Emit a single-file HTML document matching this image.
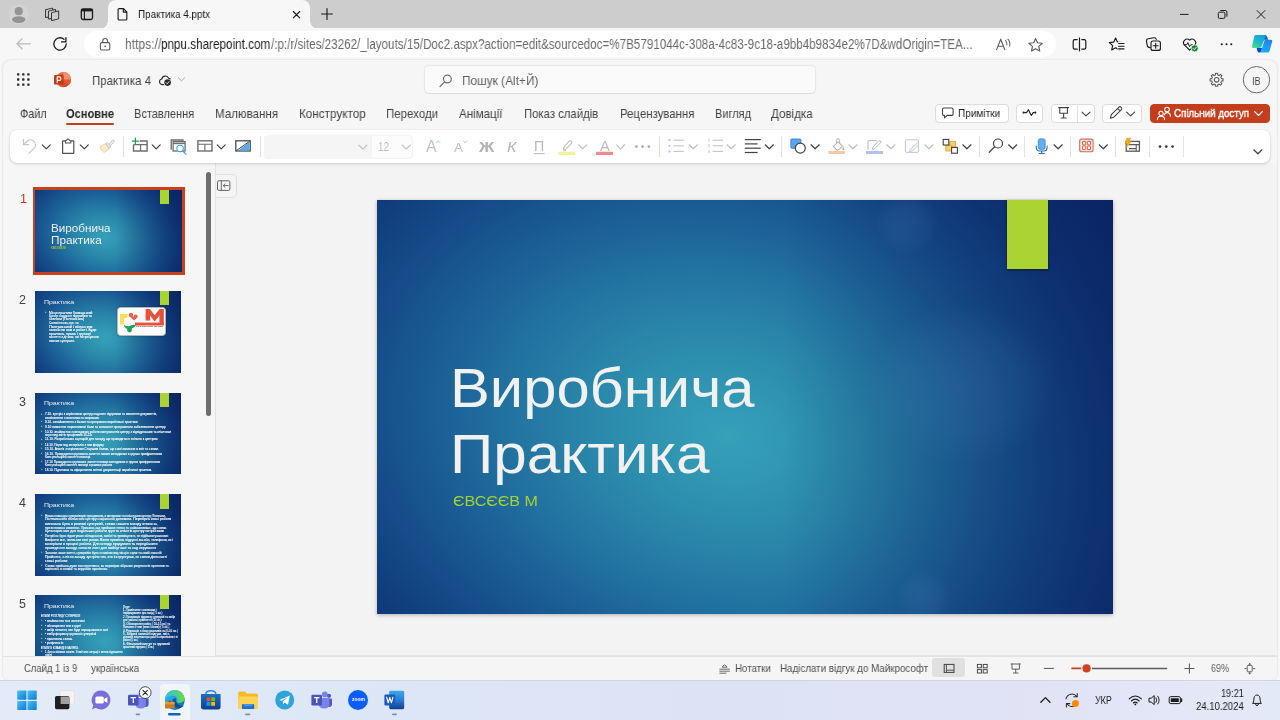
<!DOCTYPE html>
<html lang="uk">
<head>
<meta charset="utf-8">
<title>Практика 4.pptx</title>
<style>
*{box-sizing:border-box;margin:0;padding:0}
html,body{width:1280px;height:720px;overflow:hidden;background:#f7f7f7;font-family:"Liberation Sans",sans-serif;color:#242424}
.a{position:absolute}
.t{position:absolute;white-space:nowrap;line-height:1;transform-origin:0 50%;will-change:transform}
#ico{position:absolute;left:0;top:0;width:1280px;height:720px;overflow:visible;pointer-events:none}
#tabbar{left:0;top:0;width:1280px;height:29px;background:#cdcdcd}
#tab{left:108px;top:0;width:202px;height:29px;background:#f7f7f7;border-radius:8px 8px 0 0}
#tab:before,#tab:after{content:"";position:absolute;bottom:0;width:8px;height:8px}
#tab:before{left:-8px;background:radial-gradient(circle at 0 0,transparent 7.5px,#f7f7f7 8px)}
#tab:after{right:-8px;background:radial-gradient(circle at 100% 0,transparent 7.5px,#f7f7f7 8px)}
#addr{left:0;top:28px;width:1280px;height:33px;background:#f7f7f7}
#url{left:84px;top:31px;width:972px;height:26px;background:#fff;border-radius:13px}
#app{left:3px;top:60px;width:1274px;height:620px;background:#f6f6f6;border-radius:8px 8px 6px 6px;box-shadow:0 0 2px rgba(0,0,0,.18)}
#toolbar{left:10px;top:130px;width:1260px;height:33px;background:#fff;border-radius:7px;box-shadow:0 1px 3px rgba(0,0,0,.16),0 0 1px rgba(0,0,0,.12)}
#search{left:425px;top:66px;width:390px;height:27px;background:#fafafa;border-radius:4px;box-shadow:0 0 2px rgba(0,0,0,.2),0 1px 1px rgba(0,0,0,.06)}
#fontbox{left:264px;top:135px;width:107px;height:24px;background:#f5f5f5;border-radius:4px 0 0 4px}
#sizebox{left:371px;top:135px;width:42px;height:24px;background:#fcfcfc;border:1px solid #f3f3f3;border-radius:0 4px 4px 0}
#canvas{left:215px;top:163px;width:1062px;height:493px;background:#f3f3f3;border-left:1px solid #e2e2e2;box-shadow:inset 0 -1px 0 #e6e6e6}
#status{left:3px;top:656px;width:1274px;height:24px;background:#f5f5f5;border-top:1px solid #e3e3e3;border-radius:0 0 6px 6px}
#taskbar{left:0;top:680px;width:1280px;height:40px;background:linear-gradient(90deg,#e3ebf8 0%,#dde7f6 25%,#dce3f5 55%,#e1e3f5 80%,#e4e9f7 100%);border-top:1px solid #cfd6e2}
.btn{position:absolute;top:103.5px;height:19px;background:#fff;border:1px solid #dcdcdc;border-radius:4px}
.sep{position:absolute;top:136px;width:1px;height:21px;background:#e3e3e3}
.thumb{position:absolute;z-index:0;left:35px;width:146px;height:82px;background:#0c2e6e;overflow:hidden}
.thumb:before{content:"";position:absolute;left:-40px;top:-60px;width:226px;height:202px;transform:skewX(10deg);background:radial-gradient(ellipse 95.3px 73.4px at 108.7px 106.8px,#36a0b8 0%,#3299b4 10%,#2a88ab 28%,#2273a1 45%,#1b5f96 60%,#154c89 75%,#103b7b 90%,#0c2e6e 108%)}
.thumb:after{content:"";position:absolute;left:0;top:0;width:100%;height:100%;background:linear-gradient(90deg,rgba(8,28,92,0) 55%,rgba(8,28,92,.55) 100%)}
.thumb>*{z-index:2}
.thumb i{position:absolute;left:124.9px;top:0;width:9px;height:14.2px;background:#abd332}
.thumb b{position:absolute;will-change:transform;left:9px;top:7.5px;font-size:5.6px;font-weight:normal;color:#eef3f7;line-height:1;transform:scaleX(1.12);transform-origin:0 0}
.thumb p{position:absolute;text-shadow:0 0 .5px rgba(255,255,255,.9);will-change:transform;font-size:2.45px;line-height:3.38px;color:#f4f7fa;font-weight:bold;white-space:pre;letter-spacing:-.02px}
.num{position:absolute;will-change:transform;left:19px;font-size:12.5px;color:#424242;line-height:1}

</style>
</head>
<body>
<div class="a" id="tabbar"></div>
<div class="a" id="tab"></div>
<div class="a" id="addr"></div>
<div class="a" id="url"></div>
<div class="a" id="app"></div>
<div class="a" id="search"></div>
<div class="a" style="left:66px;top:123px;width:48px;height:2.4px;background:#c43e1c;border-radius:1.2px"></div>
<div class="btn" style="left:934.5px;width:74px"></div>
<div class="btn" style="left:1015.5px;width:27px"></div>
<div class="btn" style="left:1050.5px;width:44.5px"></div>
<div class="a" style="left:1077px;top:104px;width:1px;height:18px;background:#e0e0e0"></div>
<div class="btn" style="left:1102px;width:40px"></div>
<div class="btn" style="left:1150px;width:120px;background:#c43e1c;border-color:#c43e1c"></div>
<div class="a" id="canvas"></div>
<div class="a" id="toolbar"></div>
<div class="a" id="fontbox"></div>
<div class="a" id="sizebox"></div>
<div class="sep" style="left:122.5px"></div>
<div class="sep" style="left:260px"></div>
<div class="sep" style="left:659px"></div>
<div class="sep" style="left:781px"></div>
<div class="sep" style="left:979px"></div>
<div class="sep" style="left:1024px"></div>
<div class="sep" style="left:1070px"></div>
<div class="sep" style="left:1115px"></div>
<div class="sep" style="left:1149px"></div>
<div class="sep" style="left:1183px"></div>
<div class="a" id="slide" style="left:377px;top:200px;width:735.5px;height:414px;overflow:hidden;background:#0c2e6e;box-shadow:0 1px 4px rgba(0,0,0,.28)"><div style="position:absolute;left:-200px;top:-300px;width:1136px;height:1014px;transform:skewX(10deg);background:radial-gradient(ellipse 480px 370px at 546px 536px,#36a0b8 0%,#3299b4 10%,#2a88ab 28%,#2273a1 45%,#1b5f96 60%,#154c89 75%,#103b7b 90%,#0c2e6e 108%)"></div><div style="position:absolute;left:0;top:0;width:100%;height:100%;background:linear-gradient(90deg,rgba(8,28,92,0) 55%,rgba(8,28,92,.55) 100%)"></div><div style="position:absolute;left:0;top:0;width:100%;height:100%;background:radial-gradient(circle 32px at 530px 23px,rgba(110,160,215,.12) 0%,rgba(110,160,215,.08) 55%,rgba(110,160,215,0) 100%),radial-gradient(circle 28px at 547px 398px,rgba(110,160,215,.13) 0%,rgba(110,160,215,.08) 55%,rgba(110,160,215,0) 100%),radial-gradient(ellipse 95px 80px at 585px 185px,rgba(80,140,200,.17) 0%,rgba(80,140,200,.1) 60%,rgba(80,140,200,0) 100%)"></div></div>
<div class="a" style="left:1007px;top:200px;width:40.5px;height:69px;background:#abd332;box-shadow:0 1px 2.5px rgba(0,0,0,.5)"></div>
<div class="a" style="left:205.5px;top:172px;width:5px;height:244px;background:#6e6e6e;border-radius:2.5px"></div>
<div class="a" style="left:216px;top:173.5px;width:21px;height:24px;background:#f5f5f5;border:1px solid #dedede;border-left:none;border-radius:0 5px 5px 0"></div>
<div class="a" id="status"></div>
<div class="a" id="taskbar"></div>
<div class="a" style="left:932px;top:658px;width:33px;height:19px;background:#e0e0e0;border-radius:3px"></div>
<div class="a" style="left:160px;top:684px;width:30px;height:36px;background:rgba(255,255,255,.55);border-radius:4px 4px 0 0"></div>

<div class="a" style="left:32.5px;top:187px;width:152px;height:87.5px;background:#c8401d"></div>
<div class="thumb" style="top:189.5px;height:82.5px;width:147px"><i></i></div>
<div class="thumb" style="top:291.3px"><i></i>
<div class="a" style="left:81.7px;top:15.6px;width:49px;height:29px;background:#fbfbfb;border:1px solid #b4bac2;border-radius:3.5px;box-shadow:0 0 1.5px rgba(0,0,0,.5)"></div>
</div>
<div class="thumb" style="top:392.6px;height:81.6px"><i></i></div>
<div class="thumb" style="top:494.4px"><i></i></div>
<div class="thumb" style="top:595.3px;height:60.5px"><i></i></div>
<div class="num" style="top:192.5px;color:#c43e1c;left:19.5px">1</div>
<div class="num" style="top:293.8px">2</div>
<div class="num" style="top:395.5px">3</div>
<div class="num" style="top:496.8px">4</div>
<div class="num" style="top:597.8px">5</div>

<svg id="ico" viewBox="0 0 1280 720" width="1280" height="720">
<defs><linearGradient id="gWin" x1="0" y1="0" x2="1" y2="1"><stop offset="0" stop-color="#4cc2f7"/><stop offset="1" stop-color="#0a78d4"/></linearGradient><linearGradient id="gPP" x1="0" y1="0" x2="1" y2="1"><stop offset="0" stop-color="#f0714a"/><stop offset="1" stop-color="#c8401d"/></linearGradient><linearGradient id="gEdge" x1="0" y1="0" x2="1" y2="1"><stop offset="0" stop-color="#35c1f1"/><stop offset=".5" stop-color="#1b9de2"/><stop offset="1" stop-color="#0c59a4"/></linearGradient><linearGradient id="gEdge2" x1="0" y1="0" x2="1" y2="0"><stop offset="0" stop-color="#2dc2e8"/><stop offset="1" stop-color="#6bd649"/></linearGradient><linearGradient id="gCopL" x1=".8" y1="0" x2=".2" y2="1"><stop offset="0" stop-color="#12a0dc"/><stop offset=".55" stop-color="#1fb8c8"/><stop offset="1" stop-color="#43e08c"/></linearGradient><linearGradient id="gCopR" x1=".6" y1="0" x2=".4" y2="1"><stop offset="0" stop-color="#2a7fe6"/><stop offset="1" stop-color="#14b2f8"/></linearGradient><linearGradient id="gWord" x1="0" y1="0" x2="0" y2="1"><stop offset="0" stop-color="#41a5ee"/><stop offset=".5" stop-color="#2b7cd3"/><stop offset="1" stop-color="#103f91"/></linearGradient><linearGradient id="gStore" x1="0" y1="0" x2="0" y2="1"><stop offset="0" stop-color="#1d6fc9"/><stop offset="1" stop-color="#0f3f8f"/></linearGradient></defs>
<g id="tabicons">
<circle cx="18.8" cy="14.4" r="10" fill="#d3d3d3"/>
<circle cx="18.7" cy="11.2" r="4.1" fill="#949494"/>
<ellipse cx="18.7" cy="19.6" rx="6.7" ry="3.3" fill="#939393"/>
<g fill="#cdcdcd" stroke="#2b2b2b" stroke-width="1.2" stroke-linejoin="round">
<path d="M46.0 10.2 L52.2 8.6 L52.2 15.5 L46.0 17.1 Z" stroke-width="1.9"/>
<path d="M46.0 10.2 L52.2 8.6 L52.2 15.5 L46.0 17.1 Z" stroke="#cdcdcd" stroke-width=".1"/>
<path d="M48.9 11.6 L55.1 10.0 L55.1 16.9 L48.9 18.5 Z" stroke-width="1.9"/>
<path d="M48.9 11.6 L55.1 10.0 L55.1 16.9 L48.9 18.5 Z" stroke="#cdcdcd" stroke-width=".1"/>
<path d="M52.0 13.1 L58.2 11.5 L58.2 18.4 L52.0 20.0 Z" stroke-width="1.9"/>
<path d="M52.0 13.1 L58.2 11.5 L58.2 18.4 L52.0 20.0 Z" stroke="#cdcdcd" stroke-width=".1"/>
</g>
<rect x="81.3" y="8.9" width="11.2" height="10.6" rx="1.8" fill="none" stroke="#1b1b1b" stroke-width="1.3"/>
<path d="M81.3 10.2 h11.2" stroke="#1b1b1b" stroke-width="2.4"/>
<path d="M84.4 10 v9.4" stroke="#1b1b1b" stroke-width="1.15"/>
<path d="M119.2 8.6 h4.3 l3.3 3.3 v7 q0 1.1 -1.1 1.1 h-6.5 q-1.1 0 -1.1 -1.1 v-9.2 q0 -1.1 1.1 -1.1z M123.3 8.8 v3.3 h3.3" fill="none" stroke="#1b1b1b" stroke-width="1.15" stroke-linejoin="round"/>
<path d="M293.3 11.5 l6.4 6.4 M299.7 11.5 l-6.4 6.4" stroke="#1b1b1b" stroke-width="1.15" stroke-linecap="round"/>
<path d="M321.6 14 h10.8 M327 8.6 v10.8" stroke="#1b1b1b" stroke-width="1.15" stroke-linecap="round"/>
<path d="M1180 14.4 h8.6" stroke="#1b1b1b" stroke-width="1"/>
<rect x="1218.3" y="12.2" width="6.6" height="6.2" rx="1.2" fill="none" stroke="#1b1b1b" stroke-width="1"/>
<path d="M1220.3 10.5 h5 q1.6 0 1.6 1.6 v4.6" fill="none" stroke="#1b1b1b" stroke-width="1"/>
<path d="M1256.8 10.3 l8.4 8.4 M1265.2 10.3 l-8.4 8.4" stroke="#1b1b1b" stroke-width="1"/>
</g>
<g id="addricons">
<path d="M17 43.8 h13.4 M22.2 38.6 l-5.2 5.2 l5.2 5.2" fill="none" stroke="#bcbcbc" stroke-width="1.25" stroke-linecap="round" stroke-linejoin="round"/>
<path d="M66.2 44 a6.2 6.2 0 1 1 -2.2 -4.75" fill="none" stroke="#1b1b1b" stroke-width="1.3" stroke-linecap="round"/>
<path d="M65.9 37.6 v4.3 h-4.3" fill="none" stroke="#1b1b1b" stroke-width="1.3" stroke-linecap="round" stroke-linejoin="round"/>
<rect x="100.4" y="42.6" width="9.4" height="7.4" rx="1.4" fill="none" stroke="#5a5a5a" stroke-width="1.1"/>
<path d="M102.7 42.4 v-1.5 a2.4 2.4 0 0 1 4.8 0 v1.5" fill="none" stroke="#5a5a5a" stroke-width="1.1"/>
<circle cx="105.1" cy="46.3" r=".9" fill="#5a5a5a"/>
<path d="M996.6 49.6 l4.1 -10.4 l4.1 10.4 M998.2 46.2 h5" fill="none" stroke="#5f5f5f" stroke-width="1.15" stroke-linejoin="round" stroke-linecap="round"/>
<path d="M1005.6 40.6 q1.8 1.8 1.3 4.4 M1007.8 39.2 q2.8 2.8 1.9 6.8" fill="none" stroke="#5f5f5f" stroke-width="1.05" stroke-linecap="round"/>
<polygon points="1035.60,38.40 1037.54,42.73 1042.26,43.24 1038.74,46.42 1039.71,51.06 1035.60,48.70 1031.49,51.06 1032.46,46.42 1028.94,43.24 1033.66,42.73" fill="none" stroke="#5f5f5f" stroke-width="1.15" stroke-linejoin="round" />
<path d="M1077.2 39.6 h-2.4 q-1.6 0 -1.6 1.6 v6.4 q0 1.6 1.6 1.6 h2.4 M1081.8 39.6 h2.4 q1.6 0 1.6 1.6 v6.4 q0 1.6 -1.6 1.6 h-2.4 M1079.5 37.9 v12.9" fill="none" stroke="#1b1b1b" stroke-width="1.2" stroke-linecap="round"/>
<polygon points="1115.60,38.00 1117.42,42.09 1121.88,42.56 1118.55,45.56 1119.48,49.94 1115.60,47.70 1111.72,49.94 1112.65,45.56 1109.32,42.56 1113.78,42.09" fill="none" stroke="#1b1b1b" stroke-width="1.15" stroke-linejoin="round" />
<rect x="1117.6" y="42" width="7" height="8.5" fill="#f7f7f7"/>
<path d="M1118.6 43.5 h5.4 M1118.6 46.2 h5.4 M1118.6 48.9 h5.4" stroke="#1b1b1b" stroke-width="1.1" stroke-linecap="round"/>
<path d="M1150.2 47.6 q-2.6 0 -3 -2.2 l-.7 -4.2 q-.3 -2 1.7 -2.4 l5.6 -1 q2 -.3 2.5 1.5" fill="none" stroke="#1b1b1b" stroke-width="1.15" stroke-linecap="round"/>
<rect x="1151" y="41" width="9.4" height="9.4" rx="2" fill="#f7f7f7" stroke="#1b1b1b" stroke-width="1.15"/>
<path d="M1153.2 45.7 h5 M1155.7 43.2 v5" stroke="#1b1b1b" stroke-width="1.1" stroke-linecap="round"/>
<path d="M1189.6 50.2 l-5.3 -5.3 a3.55 3.55 0 0 1 5.3 -4.7 a3.55 3.55 0 0 1 5.3 4.7 z" fill="none" stroke="#1b1b1b" stroke-width="1.15" stroke-linejoin="round"/>
<path d="M1184.2 44.8 h2.5 l1.2 -2.2 l1.7 4 l1.1 -1.8 h1.6" fill="none" stroke="#1b1b1b" stroke-width="1" stroke-linejoin="round" stroke-linecap="round"/>
<circle cx="1194.7" cy="48.3" r="3.6" fill="#1a8a3a" stroke="#f7f7f7" stroke-width=".8"/>
<path d="M1193 48.4 l1.2 1.2 l2.2 -2.4" fill="none" stroke="#fff" stroke-width=".9" stroke-linecap="round" stroke-linejoin="round"/>
<circle cx="1221.7" cy="44.2" r="1.05" fill="#1b1b1b"/>
<circle cx="1226.5" cy="44.2" r="1.05" fill="#1b1b1b"/>
<circle cx="1231.3" cy="44.2" r="1.05" fill="#1b1b1b"/>
<g><path d="M1262 35 h2.800 q1.700 0 2.300 1.700 l1 3 h-4.600z" fill="#0f5fae"/><path d="M1256.700 47.900 h5.700 l-1.300 3.500 q-.5 1.200 -1.800 1.200 q-1.500 0 -1.900 -1.500z" fill="#0d43d4"/><path d="M1255.800 35 h8.800 q1.500 0 .9 1.600 l-3.900 10 q-.6 1.300 -2 1.300 h-6.600 q-1.400 0 -1 -1.700 l2.200 -9.800 q.4 -1.400 1.600 -1.400z" fill="url(#gCopL)"/><path d="M1265.300 39.700 h5.400 q2 0 1.500 1.900 l-2.600 9.400 q-.5 1.600 -2.100 1.600 h-6 q-1 0 -.4 -1.600 l3.200 -10 q.4 -1.300 1 -1.300z" fill="url(#gCopR)"/></g>
</g>
<g id="hdr">
<rect x="17.0" y="73.2" width="2.4" height="2.4" rx=".6" fill="#2b2b2b"/>
<rect x="22.1" y="73.2" width="2.4" height="2.4" rx=".6" fill="#2b2b2b"/>
<rect x="27.2" y="73.2" width="2.4" height="2.4" rx=".6" fill="#2b2b2b"/>
<rect x="17.0" y="78.3" width="2.4" height="2.4" rx=".6" fill="#2b2b2b"/>
<rect x="22.1" y="78.3" width="2.4" height="2.4" rx=".6" fill="#2b2b2b"/>
<rect x="27.2" y="78.3" width="2.4" height="2.4" rx=".6" fill="#2b2b2b"/>
<rect x="17.0" y="83.4" width="2.4" height="2.4" rx=".6" fill="#2b2b2b"/>
<rect x="22.1" y="83.4" width="2.4" height="2.4" rx=".6" fill="#2b2b2b"/>
<rect x="27.2" y="83.4" width="2.4" height="2.4" rx=".6" fill="#2b2b2b"/>
<circle cx="63.4" cy="79.7" r="7.6" fill="url(#gPP)"/>
<path d="M63.4 72.1 a7.6 7.6 0 0 1 7.6 7.6 h-7.6z" fill="#f58f6c"/>
<path d="M63.4 79.7 h7.6 a7.6 7.6 0 0 1 -2.3 5.4 l-5.3 -5.4z" fill="#e05a33"/>
<rect x="54" y="75" width="9.6" height="9.6" rx="1.2" fill="#c13b1b"/>
<path d="M57.2 82.7 v-5.8 h2 a1.75 1.75 0 0 1 0 3.5 h-2" fill="none" stroke="#fff" stroke-width="1.15" stroke-linejoin="round"/>
<path d="M163.6 84.6 h-1.3 a2.8 2.8 0 0 1 -.5 -5.55 a3.6 3.6 0 0 1 6.9 -.7 q.9 .1 1.5 .6" fill="none" stroke="#2b2b2b" stroke-width="1.1" stroke-linecap="round"/>
<circle cx="167.6" cy="82.6" r="3.3" fill="#2b2b2b"/>
<path d="M166.1 82.7 l1.1 1.1 l1.9 -2.2" fill="none" stroke="#fff" stroke-width=".85" stroke-linecap="round" stroke-linejoin="round"/>
<path d="M178.4 77.8 L181.5 80.8 L184.6 77.8" fill="none" stroke="#a6a6a6" stroke-width="1.0" stroke-linecap="round" stroke-linejoin="round"/>
<circle cx="447.4" cy="79" r="3.9" fill="none" stroke="#707070" stroke-width="1.15"/>
<path d="M444.6 81.9 l-4.6 4.6" stroke="#707070" stroke-width="1.2" stroke-linecap="round"/>
<polygon points="1223.10,78.68 1223.10,80.92 1221.47,80.92 1220.84,82.46 1221.99,83.61 1220.41,85.19 1219.26,84.04 1217.72,84.67 1217.72,86.30 1215.48,86.30 1215.48,84.67 1213.94,84.04 1212.79,85.19 1211.21,83.61 1212.36,82.46 1211.73,80.92 1210.10,80.92 1210.10,78.68 1211.73,78.68 1212.36,77.14 1211.21,75.99 1212.79,74.41 1213.94,75.56 1215.48,74.93 1215.48,73.30 1217.72,73.30 1217.72,74.93 1219.26,75.56 1220.41,74.41 1221.99,75.99 1220.84,77.14 1221.47,78.68" fill="none" stroke="#5a5a5a" stroke-width="1.05" stroke-linejoin="round"/>
<circle cx="1216.6" cy="79.8" r="2.3" fill="none" stroke="#5a5a5a" stroke-width="1.05"/>
<circle cx="1256.5" cy="79.7" r="13.2" fill="#f5f5f5" stroke="#6a6a6a" stroke-width="1"/>
</g>
<g id="rbtn">
<path d="M943.8 108 h8 q1.3 0 1.3 1.3 v4.8 q0 1.3 -1.3 1.3 h-4.6 l-2.7 2.4 v-2.4 h-.7 q-1.3 0 -1.3 -1.3 v-4.8 q0 -1.3 1.3 -1.3z" fill="none" stroke="#424242" stroke-width="1.1" stroke-linejoin="round"/>
<path d="M1024.6 112.6 h1.9 l1.9 -2.9 l2.9 5.8 l1.9 -2.9 h1" fill="none" stroke="#242424" stroke-width="1.15" stroke-linejoin="round" stroke-linecap="round"/>
<circle cx="1023.6" cy="112.6" r="1.1" fill="#242424"/><circle cx="1035.3" cy="112.6" r="1.1" fill="#242424"/>
<path d="M1058.6 107.6 h10 M1059.8 107.6 v5.6 h7.6 v-5.6 M1063.6 113.2 v4.6 M1061 118 h5.2" fill="none" stroke="#424242" stroke-width="1.1" stroke-linecap="round" stroke-linejoin="round"/>
<path d="M1082.0 112.1 L1086.0 115.9 L1090.0 112.1" fill="none" stroke="#424242" stroke-width="1.15" stroke-linecap="round" stroke-linejoin="round"/>
<path d="M1110.4 118.3 l.9 -3.6 l7.4 -7.4 a1.5 1.5 0 0 1 2.5 2.5 l-7.4 7.4 z M1117.6 108.4 l2.5 2.5" fill="none" stroke="#424242" stroke-width="1.1" stroke-linejoin="round"/>
<path d="M1126.6 112.1 L1130.6 115.9 L1134.6 112.1" fill="none" stroke="#424242" stroke-width="1.15" stroke-linecap="round" stroke-linejoin="round"/>
<circle cx="1161" cy="113.4" r="2.1" fill="none" stroke="#fff" stroke-width="1.05"/>
<path d="M1157.4 119.6 q0 -3.4 3.6 -3.4 q3.6 0 3.6 3.4" fill="none" stroke="#fff" stroke-width="1.05" stroke-linecap="round"/>
<circle cx="1167" cy="109.6" r="2.3" fill="none" stroke="#fff" stroke-width="1.05"/>
<path d="M1164.2 115.2 q.6 -2.6 2.8 -2.6 q3.4 0 3.4 3.6" fill="none" stroke="#fff" stroke-width="1.05" stroke-linecap="round"/>
<path d="M1254.6 111.7 L1258.5 115.5 L1262.4 111.7" fill="none" stroke="#fff" stroke-width="1.15" stroke-linecap="round" stroke-linejoin="round"/>
</g>
<g id="tb">
<path d="M23.4 139.2 v5.4 h5.4" fill="none" stroke="#c6c6c6" stroke-width="1.15" stroke-linecap="round" stroke-linejoin="round"/>
<path d="M23.8 144.2 l3.4 -3 a5 5 0 0 1 7.2 6.9 l-5.6 5.2" fill="none" stroke="#c6c6c6" stroke-width="1.15" stroke-linecap="round" stroke-linejoin="round"/>
<path d="M42.3 144.8 L46.3 148.8 L50.3 144.8" fill="none" stroke="#424242" stroke-width="1.2" stroke-linecap="round" stroke-linejoin="round"/>
<path d="M65.6 140.8 h-2.4 q-.6 0 -.6 .6 v11.400 q0 .6 .6 .6 h10 q.6 0 .6 -.6 v-11.400 q0 -.6 -.6 -.6 h-2.400" fill="none" stroke="#505050" stroke-width="1.2"/>
<path d="M65.400 143 v-1.800 q0 -.5 .5 -.7 l1 -.4 q.3 -1.100 1.200 -1.100 q.9 0 1.200 1.100 l1 .4 q.5 .2 .5 .7 v1.800z" fill="#fff" stroke="#505050" stroke-width="1.050" stroke-linejoin="round"/>
<path d="M80.3 144.8 L84.3 148.8 L88.3 144.8" fill="none" stroke="#424242" stroke-width="1.2" stroke-linecap="round" stroke-linejoin="round"/>
<g opacity=".55"><path d="M100 146.6 l5.6 -3 l3.6 5.4 l-5.2 3.4 q-2.6 -1.2 -4 -5.8z" fill="#f9d9a8" stroke="#e0a85c" stroke-width=".9" stroke-linejoin="round"/><path d="M105.8 143.8 l1.6 -1.4 l3.4 4.6 l-1.6 1.4z" fill="#d8d8d8" stroke="#8a8a8a" stroke-width=".8"/><path d="M109.2 144.2 l3 -3.8 q1 -.8 1.8 0 q.6 .8 0 1.6 l-3.4 3.6z" fill="#e4e4e4" stroke="#8a8a8a" stroke-width=".8"/></g>
<path d="M139.600 141 h7.500 v10 h-13.600 v-6.200" fill="none" stroke="#6e6e6e" stroke-width="1.400"/>
<path d="M133.500 144.600 h13.600 M140.600 144.600 v6.400" stroke="#6e6e6e" stroke-width="1.150"/>
<path d="M132.400 141.200 h6 M135.400 138.200 v6" stroke="#1e9c4d" stroke-width="1.200" stroke-linecap="round"/>
<path d="M152.2 144.8 L156.2 148.8 L160.2 144.8" fill="none" stroke="#424242" stroke-width="1.2" stroke-linecap="round" stroke-linejoin="round"/>
<path d="M171.200 149.800 v-9.800 h11.800 v1.600" fill="none" stroke="#6e6e6e" stroke-width="1.300"/>
<rect x="173.100" y="141.600" width="12" height="9.400" fill="#fff" stroke="#6e6e6e" stroke-width="1.300"/>
<path d="M173.100 143.400 h12" stroke="#6e6e6e" stroke-width="1.500"/>
<circle cx="180.100" cy="148.400" r="3.200" fill="#fff" stroke="#4aa3dc" stroke-width="1.100"/>
<path d="M182.500 150.800 l3.500 3.400" stroke="#4aa3dc" stroke-width="1.200" stroke-linecap="round"/>
<rect x="197.900" y="140.800" width="14.100" height="10.200" fill="none" stroke="#6e6e6e" stroke-width="1.400"/>
<path d="M197.900 144.200 h14.100 M204.900 144.200 v6.800" fill="none" stroke="#6e6e6e" stroke-width="1.150"/>
<path d="M217.2 144.8 L221.2 148.8 L225.2 144.8" fill="none" stroke="#424242" stroke-width="1.2" stroke-linecap="round" stroke-linejoin="round"/>
<rect x="235.800" y="140.800" width="14.400" height="10.200" fill="#fff" stroke="#4a4a4a" stroke-width="1.300"/>
<path d="M249.600 141.800 v8.600 h-11.400z" fill="#5aa9f0"/>
<path d="M236.400 150.600 l13.400 -9.400" stroke="#4a4a4a" stroke-width="1"/>
<path d="M358.8 145.2 L362.8 149.2 L366.8 145.2" fill="none" stroke="#c2c2c2" stroke-width="1.2" stroke-linecap="round" stroke-linejoin="round"/>
<path d="M402.2 145.2 L406.2 149.2 L410.2 145.2" fill="none" stroke="#c2c2c2" stroke-width="1.2" stroke-linecap="round" stroke-linejoin="round"/>
<path d="M436.6 142.6 l1.7 -1.8 l1.7 1.8" fill="none" stroke="#9cc4e4" stroke-width=".9" stroke-linecap="round" stroke-linejoin="round"/>
<path d="M463.4 141 l1.7 1.8 l1.7 -1.8" fill="none" stroke="#9cc4e4" stroke-width=".9" stroke-linecap="round" stroke-linejoin="round"/>
<path d="M533.6 153.6 h11" stroke="#b8b8b8" stroke-width="1"/>
<path d="M563.4 149.6 l.6 -2.6 l5.2 -5.8 q1.2 -1 2.2 0 q1 1 0 2.2 l-5.4 5.6 z M566 150.4 l-2.8 .6" fill="none" stroke="#bdbdbd" stroke-width="1.05" stroke-linejoin="round"/>
<rect x="558" y="151.8" width="17.4" height="3.2" rx=".6" fill="#f5f39a"/>
<path d="M578.6 144.8 L582.6 148.8 L586.6 144.8" fill="none" stroke="#c0c0c0" stroke-width="1.2" stroke-linecap="round" stroke-linejoin="round"/>
<rect x="596" y="151.8" width="17" height="3.2" rx=".6" fill="#f08a8a"/>
<path d="M616.6 144.8 L620.6 148.8 L624.6 144.8" fill="none" stroke="#c0c0c0" stroke-width="1.2" stroke-linecap="round" stroke-linejoin="round"/>
<circle cx="636.4" cy="146.6" r="1.3" fill="#a8a8a8"/>
<circle cx="642.6" cy="146.6" r="1.3" fill="#a8a8a8"/>
<circle cx="648.8" cy="146.6" r="1.3" fill="#a8a8a8"/>
<circle cx="669.4" cy="140.2" r="1.15" fill="#a8cdea"/>
<path d="M673.4 140.2 h10.4" stroke="#c4c4c4" stroke-width="1.1"/>
<circle cx="669.4" cy="145.8" r="1.15" fill="#a8cdea"/>
<path d="M673.4 145.8 h10.4" stroke="#c4c4c4" stroke-width="1.1"/>
<circle cx="669.4" cy="151.4" r="1.15" fill="#a8cdea"/>
<path d="M673.4 151.4 h10.4" stroke="#c4c4c4" stroke-width="1.1"/>
<path d="M689.0 144.8 L693.2 148.8 L697.4 144.8" fill="none" stroke="#c0c0c0" stroke-width="1.2" stroke-linecap="round" stroke-linejoin="round"/>
<path d="M709 138.6 v3.2" stroke="#a8cdea" stroke-width="1"/>
<path d="M712.6 140.2 h10.4" stroke="#c4c4c4" stroke-width="1.1"/>
<path d="M709 144.20000000000002 v3.2" stroke="#a8cdea" stroke-width="1"/>
<path d="M712.6 145.8 h10.4" stroke="#c4c4c4" stroke-width="1.1"/>
<path d="M709 149.8 v3.2" stroke="#a8cdea" stroke-width="1"/>
<path d="M712.6 151.4 h10.4" stroke="#c4c4c4" stroke-width="1.1"/>
<path d="M727.0 144.8 L731.2 148.8 L735.4 144.8" fill="none" stroke="#c0c0c0" stroke-width="1.2" stroke-linecap="round" stroke-linejoin="round"/>
<path d="M744.8 139.6 h16" stroke="#424242" stroke-width="1.2"/>
<path d="M744.8 143.9 h12.8" stroke="#424242" stroke-width="1.2"/>
<path d="M744.8 148.2 h16" stroke="#424242" stroke-width="1.2"/>
<path d="M744.8 152.5 h12.8" stroke="#424242" stroke-width="1.2"/>
<path d="M765.2 144.8 L769.3 148.8 L773.4 144.8" fill="none" stroke="#424242" stroke-width="1.2" stroke-linecap="round" stroke-linejoin="round"/>
<rect x="790.9" y="139" width="10" height="9.2" rx=".8" fill="#5aa7f0" stroke="#2f7fd6" stroke-width=".9"/>
<circle cx="800.3" cy="148.1" r="5" fill="#fff" stroke="#424242" stroke-width="1.2"/>
<path d="M811.0 144.8 L815.1 148.8 L819.2 144.8" fill="none" stroke="#424242" stroke-width="1.2" stroke-linecap="round" stroke-linejoin="round"/>
<g opacity=".45"><path d="M833.6 146.4 l4.4 -4.6 l4.6 4.4 l-4.2 3.6 q-1 .6 -1.8 0z" fill="none" stroke="#5a5a5a" stroke-width="1.1" stroke-linejoin="round"/><path d="M836.4 142.8 v-2.4 q0 -1.6 1.6 -1.6 q1.6 0 1.6 1.6 v3" fill="none" stroke="#5a5a5a" stroke-width="1"/><path d="M843 146.6 q1.4 1.8 1.4 2.6 q0 1 -1 1 q-1 0 -1 -1 q0 -.8 .6 -2.6z" fill="#5a5a5a"/></g>
<rect x="828.4" y="151" width="16.4" height="3" rx=".5" fill="#f6c8a4"/>
<path d="M848.8 144.8 L852.9 148.8 L857.0 144.8" fill="none" stroke="#c0c0c0" stroke-width="1.2" stroke-linecap="round" stroke-linejoin="round"/>
<g opacity=".5"><path d="M868 150 v-9.4 h9" fill="none" stroke="#7a7a7a" stroke-width="1"/><path d="M872.4 149.4 l.7 -2.6 l5.6 -5.8 q1 -.8 1.9 0 q.8 1 0 1.9 l-5.8 5.6z" fill="#fff" stroke="#3a78c8" stroke-width="1" stroke-linejoin="round"/></g>
<rect x="866" y="151" width="17" height="3" rx=".5" fill="#b4c0ec"/>
<path d="M886.8 144.8 L890.9 148.8 L895.0 144.8" fill="none" stroke="#c0c0c0" stroke-width="1.2" stroke-linecap="round" stroke-linejoin="round"/>
<g opacity=".5"><rect x="905.4" y="139.8" width="13" height="12.6" rx="1" fill="#fff" stroke="#8a8a8a" stroke-width="1"/><path d="M909.4 152 l1 -2.8 l6.4 -6 q1 -.6 1.8 .2 q.6 1 -.2 1.8 l-6.2 6z" fill="#d8e8f6" stroke="#6a9ccc" stroke-width=".9" stroke-linejoin="round"/></g>
<path d="M924.8 144.8 L928.9 148.8 L933.0 144.8" fill="none" stroke="#c0c0c0" stroke-width="1.2" stroke-linecap="round" stroke-linejoin="round"/>
<rect x="949.8" y="141.4" width="5.8" height="5.8" fill="#f8cf72" stroke="#e0a63a" stroke-width=".9"/>
<rect x="945.8" y="145.4" width="5.8" height="5.6" fill="#f8cf72" stroke="#e0a63a" stroke-width=".9"/>
<rect x="943.2" y="139.4" width="5.6" height="5.6" fill="#fff" stroke="#424242" stroke-width="1.1"/>
<rect x="951.6" y="147.4" width="5.8" height="5.8" fill="#fff" stroke="#424242" stroke-width="1.1"/>
<path d="M962.8 144.8 L966.9 148.8 L971.0 144.8" fill="none" stroke="#424242" stroke-width="1.2" stroke-linecap="round" stroke-linejoin="round"/>
<circle cx="998" cy="143.5" r="4.5" fill="none" stroke="#424242" stroke-width="1.2"/>
<path d="M994.7 146.8 l-5.5 5.5" stroke="#424242" stroke-width="1.25" stroke-linecap="round"/>
<path d="M1008.6 144.8 L1012.7 148.8 L1016.8 144.8" fill="none" stroke="#424242" stroke-width="1.2" stroke-linecap="round" stroke-linejoin="round"/>
<rect x="1038.3" y="138.9" width="6.8" height="10.4" rx="1.8" fill="#62aff2" stroke="#3a86d6" stroke-width=".9"/>
<path d="M1036.3 146 v1.6 q0 3.4 3.2 3.4 h4.4 q3.200 0 3.200 -3.400 v-1.600 M1041.7 151 v2.200 M1039.200 153.500 h5" fill="none" stroke="#2e6fb8" stroke-width="1.1" stroke-linecap="round"/>
<path d="M1054.0 144.8 L1058.1 148.8 L1062.2 144.8" fill="none" stroke="#424242" stroke-width="1.2" stroke-linecap="round" stroke-linejoin="round"/>
<rect x="1079.7" y="139.100" width="13.4" height="12.6" rx="2" fill="#fdebe5" stroke="#dc6a52" stroke-width="1.1"/>
<rect x="1082.5" y="141.3" width="3.2" height="3.6" rx=".5" fill="#fff" stroke="#d9593f" stroke-width="1"/>
<rect x="1087.3" y="141.3" width="3.2" height="3.6" rx=".5" fill="#fff" stroke="#d9593f" stroke-width="1"/>
<rect x="1082.5" y="146" width="3.2" height="3.6" rx=".5" fill="#fff" stroke="#d9593f" stroke-width="1"/>
<rect x="1087.3" y="146" width="3.2" height="3.6" rx=".5" fill="#fff" stroke="#d9593f" stroke-width="1"/>
<path d="M1099.2 144.8 L1103.3 148.8 L1107.4 144.8" fill="none" stroke="#424242" stroke-width="1.2" stroke-linecap="round" stroke-linejoin="round"/>
<rect x="1126.2" y="141.4" width="13.2" height="9.8" fill="#fff" stroke="#5a5a5a" stroke-width="1.3"/>
<path d="M1128.6 144.6 h10.6 M1136.2 144.6 v6.4 M1129 148.6 h7" stroke="#5a5a5a" stroke-width="1.05"/>
<path d="M1126.800 138.200 h3.800 l-1.300 3 h2.200 l-5.400 6.600 l1.300 -4.400 h-2.300z" fill="#f5a623" stroke="#e08a10" stroke-width=".5" stroke-linejoin="round"/>
<circle cx="1160" cy="146.6" r="1.4" fill="#424242"/>
<circle cx="1166.3" cy="146.6" r="1.4" fill="#424242"/>
<circle cx="1172.6" cy="146.6" r="1.4" fill="#424242"/>
<path d="M1253.8 149.8 L1257.9 153.8 L1262.0 149.8" fill="none" stroke="#424242" stroke-width="1.2" stroke-linecap="round" stroke-linejoin="round"/>
</g>
<g id="st">
<rect x="217.5" y="180.8" width="12.4" height="9.6" rx="1.4" fill="none" stroke="#616161" stroke-width="1"/>
<path d="M221.3 180.8 v9.6 M228.3 185.6 h-5 M225 183.9 l-1.8 1.7 l1.8 1.7" fill="none" stroke="#616161" stroke-width=".95" stroke-linecap="round" stroke-linejoin="round"/>
<path d="M719.4 669.2 h10.4 M719.4 671.2 h10.4 M719.4 673.2 h7" stroke="#5a5a5a" stroke-width=".9"/>
<path d="M722.2 667.2 l2.4 -2.6 l2.4 2.6z" fill="none" stroke="#5a5a5a" stroke-width=".9" stroke-linejoin="round"/>
<rect x="944.2" y="664.4" width="9.8" height="8" fill="none" stroke="#424242" stroke-width="1"/>
<path d="M946.4 664.4 v8 M946.4 670.2 h7.6" stroke="#424242" stroke-width=".9"/>
<rect x="977.4" y="664.4" width="4" height="3.4" fill="none" stroke="#424242" stroke-width=".95"/>
<rect x="983.2" y="664.4" width="4" height="3.4" fill="none" stroke="#424242" stroke-width=".95"/>
<rect x="977.4" y="669.6" width="4" height="3.4" fill="none" stroke="#424242" stroke-width=".95"/>
<rect x="983.2" y="669.6" width="4" height="3.4" fill="none" stroke="#424242" stroke-width=".95"/>
<path d="M1011 664 h9.4 M1012 664 v5.2 h7.4 v-5.2 M1015.7 669.2 v3.4 M1013.4 673 h4.6" fill="none" stroke="#5a5a5a" stroke-width=".95" stroke-linecap="round"/>
<path d="M1043.8 668.4 h10" stroke="#5a5a5a" stroke-width="1.05"/>
<path d="M1072 668.4 h15" stroke="#c8401d" stroke-width="1.6" stroke-linecap="round"/>
<path d="M1087 668.4 h79.6" stroke="#5e5e5e" stroke-width="1.5" stroke-linecap="round"/>
<circle cx="1086.6" cy="668.4" r="5.4" fill="#f5f5f5"/>
<circle cx="1086.6" cy="668.4" r="4.1" fill="#cf4220"/>
<path d="M1184.4 668.4 h10 M1189.4 663.4 v10" stroke="#5a5a5a" stroke-width="1.05"/>
<rect x="1247.2" y="665.4" width="5" height="6.4" rx=".8" fill="none" stroke="#5a5a5a" stroke-width=".95"/>
<path d="M1249.7 663.4 v1.2 M1249.7 672.6 v1.4 M1244.8 668.6 h1.4 M1253.2 668.6 h1.6" stroke="#5a5a5a" stroke-width=".95" stroke-linecap="round"/>
<path d="M1248.6 664.6 l1.1 -1.2 l1.1 1.2 M1248.6 672.8 l1.1 1.2 l1.1 -1.2" fill="none" stroke="#5a5a5a" stroke-width=".8"/>
</g>
<g id="logo2">
<path d="M145.6 320.6 v-11.7 h4.2 l4.9 6.4 l4.9 -6.400 h4.2 v16.200 h-4.4 v-9.600 l-4.700 6 l-4.700 -6 v5.100z" fill="#e8503a"/>
<rect x="135" y="322.6" width="28.800" height="2.900" fill="#e8503a"/>
<circle cx="131" cy="315" r="2.200" fill="#ef5f47"/><circle cx="135.600" cy="316.600" r="2" fill="#ef5f47"/><path d="M129.600 316.200 l4.400 4.400 l3.400 -3.400z" fill="#ef5f47"/>
<path d="M120 314 h7.600 v3.200 q-3.400 1.600 -2.800 7.300 h-4.800z" fill="#f5e04a" opacity=".92"/>
<circle cx="126.900" cy="320.750" r="3.100" fill="#fdfdfd"/>
<path d="M123.750 324.800 q3 2.200 6 1.200 q3 -1.600 6.500 -1.200 q-1.600 3.200 -4.400 3.600 q.4 3.400 -2 4.100 q-2.800 0 -2.800 -3.400 q-3 -1.400 -3.300 -4.300z" fill="#21a152"/>
</g>
<g id="tk">
<rect x="17.2" y="690.6" width="9.2" height="9.2" rx=".7" fill="url(#gWin)"/>
<rect x="27.5" y="690.6" width="9.2" height="9.2" rx=".7" fill="url(#gWin)"/>
<rect x="17.2" y="700.9" width="9.2" height="9.2" rx=".7" fill="url(#gWin)"/>
<rect x="27.5" y="700.9" width="9.2" height="9.2" rx=".7" fill="url(#gWin)"/>
<rect x="60" y="690.6" width="14.4" height="13.6" rx="1.6" fill="#f2f2f2" stroke="#d4d4d4" stroke-width=".5"/>
<rect x="55" y="696" width="14.4" height="13.2" rx="1.6" fill="#1f1f1f"/>
<rect x="60.6" y="696.6" width="8.6" height="7.4" fill="#b9b9b9" opacity=".85"/>
<path d="M101 690.6 a9.4 9.4 0 1 1 -5.4 17.1 l-3.6 1.7 l1.3 -4.1 a9.4 9.4 0 0 1 7.7 -14.700z" fill="#7a6fd8"/>
<rect x="95.4" y="696.4" width="8.4" height="7.2" rx="1.6" fill="#fff"/>
<path d="M104.2 699 l3.2 -2 v6 l-3.2 -2z" fill="#fff"/>
<circle cx="141.4" cy="694.4" r="2.9" fill="#7b83eb"/>
<circle cx="145.6" cy="695.8" r="2.1" fill="#5059c9"/>
<path d="M142.6 698.4 h5 q1 0 1 1 v4.6 q0 3 -3 3 q-3 0 -3 -3z" fill="#5059c9"/>
<path d="M135.6 698.0 h9.2 q1 0 1 1 v5.600 q0 4 -5 4 q-5.200 0 -5.200 -4z" fill="#7b83eb"/>
<rect x="128" y="694.8" width="10.6" height="10.6" rx="1.2" fill="#4b53bc"/>
<path d="M130.6 697.5999999999999 h5.4 M133.3 697.5999999999999 v5.400" stroke="#fff" stroke-width="1.3"/>
<circle cx="324.79999999999995" cy="694.4" r="2.9" fill="#7b83eb"/>
<circle cx="329.0" cy="695.8" r="2.1" fill="#5059c9"/>
<path d="M326.0 698.4 h5 q1 0 1 1 v4.6 q0 3 -3 3 q-3 0 -3 -3z" fill="#5059c9"/>
<path d="M319.0 698.0 h9.2 q1 0 1 1 v5.600 q0 4 -5 4 q-5.200 0 -5.200 -4z" fill="#7b83eb"/>
<rect x="311.4" y="694.8" width="10.6" height="10.6" rx="1.2" fill="#4b53bc"/>
<path d="M314.0 697.5999999999999 h5.4 M316.7 697.5999999999999 v5.400" stroke="#fff" stroke-width="1.3"/>
<circle cx="145.2" cy="692.6" r="5.9" fill="#fafafa" stroke="#3a3a3a" stroke-width=".9"/>
<path d="M143 690.4 l4.400 4.400 M147.400 690.4 l-4.400 4.400" stroke="#2a2a2a" stroke-width="1.1" stroke-linecap="round"/>
<rect x="135.600" y="713.400" width="4.6" height="1.8" rx=".9" fill="#8a8f98"/>
<circle cx="174.8" cy="700" r="10" fill="url(#gEdge)"/>
<path d="M165 698.600 a10 10 0 0 1 19.600 -1.200 q.6 3.400 -2.800 4.800 q-3.600 1.200 -5.600 -.400 q2 -1.400 1.200 -3.600 q-1.400 -3 -5.400 -2.600 q-4.600 .8 -7 3z" fill="url(#gEdge2)"/>
<path d="M176.400 701.800 q-1.600 -1.800 -.4 -3.800 q-3.800 .4 -3.600 4.400 q.6 4.800 6.400 5.600 q3.600 0 5.400 -2.400 q-5.400 1.200 -7.800 -3.800z" fill="#0b4f9a"/>
<rect x="165" y="701.800" width="9.600" height="6.800" rx=".8" fill="#c97a24"/><rect x="165" y="701.800" width="9.600" height="2.600" fill="#e09a3a"/><rect x="168.6" y="700.600" width="2.400" height="1.600" fill="#8a5a1a"/>
<rect x="168" y="713" width="12.600" height="2.600" rx="1.300" fill="#0067c0"/>
<path d="M205.800 694 q0 -3.200 5 -3.200 q5 0 5 3.200" fill="none" stroke="#2a8be0" stroke-width="1.400"/>
<path d="M201 694 h19.600 v12.800 q0 2.600 -2.600 2.600 h-14.400 q-2.600 0 -2.600 -2.600z" fill="url(#gStore)"/>
<rect x="206.600" y="697.400" width="3.800" height="3.800" fill="#f25022"/><rect x="211.200" y="697.400" width="3.800" height="3.800" fill="#7fba00"/><rect x="206.600" y="702" width="3.800" height="3.800" fill="#00a4ef"/><rect x="211.200" y="702" width="3.800" height="3.800" fill="#ffb900"/>
<path d="M238.200 693 q0 -1.600 1.600 -1.600 h5 l2.200 2.200 h9.400 q1.600 0 1.600 1.600 v12 q0 1.600 -1.600 1.600 h-16.600 q-1.600 0 -1.600 -1.600z" fill="#f7b928"/>
<path d="M238.200 696.600 h19.800 v10.800 q0 1.600 -1.600 1.600 h-16.600 q-1.600 0 -1.600 -1.600z" fill="#fcd354"/>
<path d="M242 704.200 h12.200 v4.800 h-12.200z" fill="#1f6fd0"/><path d="M244 704.200 h8.200 v2 h-8.200z" fill="#3e9bf0"/>
<rect x="245" y="713.400" width="5.400" height="1.800" rx=".9" fill="#8a8f98"/>
<circle cx="284.700" cy="700" r="9.500" fill="#2ea4dc"/>
<path d="M279.400 700 l10.400 -4.400 l-1.800 9.200 l-3.400 -2.400 l-1.600 1.800 l-.2 -2.800 l4.800 -4.200 l-6 3.600z" fill="#fff"/>
<circle cx="358" cy="700" r="10" fill="#0b5cff"/>
<rect x="389.200" y="690.800" width="15" height="18.400" rx="1.400" fill="url(#gWord)"/>
<rect x="384.400" y="694.600" width="10.800" height="10.800" rx="1.200" fill="#185abd"/>
<path d="M386.600 697.200 l1.600 5.600 l1.600 -5.400 l1.600 5.400 l1.600 -5.600" fill="none" stroke="#fff" stroke-width="1.150" stroke-linejoin="round" stroke-linecap="round"/>
<rect x="392" y="713.400" width="5" height="1.800" rx=".9" fill="#8a8f98"/>
<path d="M1040.800 702.200 l4.600 -4.600 l4.600 4.600" fill="none" stroke="#1b1b1b" stroke-width="1.300" stroke-linecap="round" stroke-linejoin="round"/>
<path d="M1066 698.800 a6 6 0 0 1 10.800 -2.200 M1077.800 701.200 a6 6 0 0 1 -10.800 2.800" fill="none" stroke="#2b2b2b" stroke-width="1.050" stroke-linecap="round"/>
<path d="M1077.200 693.400 v3.400 h-3.400 M1066.400 707 v-3.400 h3.400" fill="none" stroke="#2b2b2b" stroke-width="1.050" stroke-linecap="round" stroke-linejoin="round"/>
<circle cx="1075.400" cy="703.400" r="3.500" fill="#ff8c00"/>
<path d="M1129.200 698.800 q6.100 -5.600 12.200 0 M1131.400 701 q3.900 -3.600 7.800 0 M1133.400 703 q1.900 -1.800 3.800 0" fill="none" stroke="#1b1b1b" stroke-width="1.100" stroke-linecap="round"/>
<circle cx="1135.300" cy="704.400" r=".9" fill="#1b1b1b"/>
<path d="M1149 698.200 h2.200 l3 -2.600 v9 l-3 -2.600 h-2.200z" fill="none" stroke="#1b1b1b" stroke-width="1" stroke-linejoin="round"/>
<path d="M1156 697.800 q1.600 2.300 0 4.600 M1157.800 696.200 q2.800 3.900 0 7.800" fill="none" stroke="#1b1b1b" stroke-width=".95" stroke-linecap="round"/>
<rect x="1169.200" y="696.600" width="11.200" height="7" rx="1.600" fill="none" stroke="#1b1b1b" stroke-width="1"/>
<rect x="1170.800" y="698.200" width="8" height="3.800" rx=".6" fill="#1b1b1b"/>
<path d="M1181.600 698.800 v2.600" stroke="#1b1b1b" stroke-width="1.200" stroke-linecap="round"/>
<path d="M1252.600 703.400 q1.200 -1 1.200 -3.200 q0 -5.200 3.200 -5.200 q3.200 0 3.200 5.200 q0 2.200 1.200 3.200z M1255.600 704 q.2 1.600 1.400 1.600 q1.200 0 1.400 -1.600" fill="none" stroke="#1b1b1b" stroke-width="1" stroke-linejoin="round"/>
</g>
</svg>
<div class="t" id="t0" style="left:137.50px;top:8.55px;font-size:11.5px;color:#1b1b1b;transform:scaleX(0.8582);">Практика 4.pptx</div>
<div class="t" id="t1" style="left:124.90px;top:37.30px;font-size:14px;color:#6b6b6b;transform:scaleX(0.8636);">https://</div>
<div class="t" id="t2" style="left:161.20px;top:37.30px;font-size:14px;color:#1b1b1b;transform:scaleX(0.8358);">pnpu.sharepoint.com</div>
<div class="t" id="t3" style="left:270.50px;top:37.30px;font-size:14px;color:#6b6b6b;transform:scaleX(0.8311);">/:p:/r/sites/23262/_layouts/15/Doc2.aspx?action=edit&amp;sourcedoc=%7B5791044c-308a-4c83-9c18-a9bb4b9834e2%7D&amp;wdOrigin=TEA...</div>
<div class="t" id="t4" style="left:92.20px;top:74.30px;font-size:13px;color:#424242;transform:scaleX(0.8833);">Практика 4</div>
<div class="t" id="t5" style="left:462.30px;top:74.30px;font-size:13px;color:#616161;transform:scaleX(0.9141);">Пошук (Alt+Й)</div>
<div class="t" id="t6" style="left:1252.40px;top:76.05px;font-size:10.5px;color:#424242;transform:scaleX(0.8466);">ІВ</div>
<div class="t" id="t7" style="left:19.50px;top:108.00px;font-size:12.6px;color:#424242;transform:scaleX(0.8654);">Файл</div>
<div class="t" id="t8" style="left:66.00px;top:108.00px;font-size:12.6px;color:#242424;font-weight:bold;transform:scaleX(0.8815);">Основне</div>
<div class="t" id="t9" style="left:133.80px;top:108.00px;font-size:12.6px;color:#424242;transform:scaleX(0.8748);">Вставлення</div>
<div class="t" id="t10" style="left:215.00px;top:108.00px;font-size:12.6px;color:#424242;transform:scaleX(0.9168);">Малювання</div>
<div class="t" id="t11" style="left:299.00px;top:108.00px;font-size:12.6px;color:#424242;transform:scaleX(0.9302);">Конструктор</div>
<div class="t" id="t12" style="left:386.20px;top:108.00px;font-size:12.6px;color:#424242;transform:scaleX(0.9130);">Переходи</div>
<div class="t" id="t13" style="left:459.00px;top:108.00px;font-size:12.6px;color:#424242;transform:scaleX(0.9191);">Анімації</div>
<div class="t" id="t14" style="left:523.80px;top:108.00px;font-size:12.6px;color:#424242;transform:scaleX(0.8994);">Показ слайдів</div>
<div class="t" id="t15" style="left:619.50px;top:108.00px;font-size:12.6px;color:#424242;transform:scaleX(0.9075);">Рецензування</div>
<div class="t" id="t16" style="left:714.50px;top:108.00px;font-size:12.6px;color:#424242;transform:scaleX(0.8721);">Вигляд</div>
<div class="t" id="t17" style="left:770.80px;top:108.00px;font-size:12.6px;color:#424242;transform:scaleX(0.9203);">Довідка</div>
<div class="t" id="t18" style="left:958.20px;top:107.55px;font-size:11.5px;color:#242424;transform:scaleX(0.8761);">Примітки</div>
<div class="t" id="t19" style="left:1174.00px;top:107.55px;font-size:11.5px;color:#ffffff;transform:scaleX(0.8482);-webkit-text-stroke:.45px #fff;">Спільний доступ</div>
<div class="t" id="t20" style="left:378.30px;top:141.30px;font-size:12px;color:#bdbdbd;transform:scaleX(0.8159);">12</div>
<div class="t" id="t21" style="left:426.00px;top:138.80px;font-size:16px;color:#c2c2c2;transform:scaleX(0.9839);">A</div>
<div class="t" id="t22" style="left:454.00px;top:141.05px;font-size:13.5px;color:#c2c2c2;transform:scaleX(0.9983);">A</div>
<div class="t" id="t23" style="left:479.00px;top:140.00px;font-size:14.6px;color:#b3b3b3;font-weight:bold;transform:scaleX(1.1588);">Ж</div>
<div class="t" id="t24" style="left:507.40px;top:140.00px;font-size:14.6px;color:#b3b3b3;font-style:italic;transform:scaleX(1.1034);">К</div>
<div class="t" id="t25" style="left:534.00px;top:139.30px;font-size:14px;color:#b8b8b8;transform:scaleX(1.0137);">П</div>
<div class="t" id="t26" style="left:599.60px;top:139.30px;font-size:14px;color:#bdbdbd;transform:scaleX(1.0488);">A</div>
<div class="t" id="t27" style="left:450.30px;top:360.80px;font-size:55px;color:#f1f1f1;transform:scaleX(1.0858);">Виробнича</div>
<div class="t" id="t28" style="left:450.30px;top:426.80px;font-size:55px;color:#f1f1f1;transform:scaleX(1.0941);">Практика</div>
<div class="t" id="t29" style="left:452.50px;top:494.05px;font-size:14.5px;color:#a4d233;transform:scaleX(1.1066);">ЄВСЄЄВ М</div>
<div class="t" id="t30" style="left:51.00px;top:222.65px;font-size:11.3px;color:#eef1f4;transform:scaleX(1.0328);">Виробнича</div>
<div class="t" id="t31" style="left:51.00px;top:234.65px;font-size:11.3px;color:#eef1f4;transform:scaleX(1.0407);">Практика</div>
<div class="t" id="t32" style="left:51.00px;top:248.40px;font-size:2.6px;color:#a4d233;font-weight:bold;transform:scaleX(1.0404);">ЄВСЄЄВ М</div>
<div class="t" id="t33" style="left:23.70px;top:663.05px;font-size:10.5px;color:#505050;transform:scaleX(0.9015);">Слайд 1 із 9</div>
<div class="t" id="t34" style="left:91.20px;top:663.05px;font-size:10.5px;color:#505050;transform:scaleX(0.9317);">українська</div>
<div class="t" id="t35" style="left:734.50px;top:663.05px;font-size:10.5px;color:#505050;transform:scaleX(0.9235);">Нотатки</div>
<div class="t" id="t36" style="left:779.70px;top:663.05px;font-size:10.5px;color:#505050;transform:scaleX(0.9300);">Надіслати відгук до Майкрософт</div>
<div class="t" id="t37" style="left:1210.80px;top:663.05px;font-size:10.5px;color:#616161;transform:scaleX(0.8613);">69%</div>
<div class="t" id="t38" style="left:1095.20px;top:695.80px;font-size:10px;color:#1b1b1b;transform:scaleX(0.8908);">УКР</div>
<div class="t" id="t39" style="left:1220.70px;top:688.80px;font-size:10px;color:#1b1b1b;transform:scaleX(0.9069);">19:21</div>
<div class="t" id="t40" style="left:1195.70px;top:701.80px;font-size:10px;color:#1b1b1b;transform:scaleX(0.9528);">24.10.2024</div>
<div class="t" id="t41" style="left:351.50px;top:697.37px;font-size:5px;color:#ffffff;font-weight:bold;transform:scaleX(0.9952);">zoom</div>
<div class="t" id="t42" style="left:44.40px;top:298.75px;font-size:6.1px;color:#e9eff5;transform:scaleX(1.1415);">Практика</div>
<div class="t" id="t43" style="left:44.40px;top:399.75px;font-size:6.1px;color:#e9eff5;transform:scaleX(1.1415);">Практика</div>
<div class="t" id="t44" style="left:44.40px;top:501.75px;font-size:6.1px;color:#e9eff5;transform:scaleX(1.1415);">Практика</div>
<div class="t" id="t45" style="left:44.40px;top:602.75px;font-size:6.1px;color:#e9eff5;transform:scaleX(1.1415);">Практика</div>
<div class="t" id="t46" style="left:48.50px;top:311.59px;font-size:3.1px;color:#f6f9fb;transform:scaleX(1.0509);text-shadow:0 0 .55px rgba(255,255,255,.95);">Місце практики Громадський</div>
<div class="t" id="t47" style="left:48.50px;top:315.34px;font-size:3.1px;color:#f6f9fb;transform:scaleX(1.0471);text-shadow:0 0 .55px rgba(255,255,255,.95);">Центр надання підтримки та</div>
<div class="t" id="t48" style="left:48.50px;top:318.49px;font-size:3.1px;color:#f6f9fb;transform:scaleX(1.1405);text-shadow:0 0 .55px rgba(255,255,255,.95);">безпеки (Полтавська)</div>
<div class="t" id="t49" style="left:48.50px;top:321.99px;font-size:3.1px;color:#f6f9fb;transform:scaleX(0.9374);text-shadow:0 0 .55px rgba(255,255,255,.95);">Солом&#x27;янська, вул. на</div>
<div class="t" id="t50" style="left:48.50px;top:325.69px;font-size:3.1px;color:#f6f9fb;transform:scaleX(1.2484);text-shadow:0 0 .55px rgba(255,255,255,.95);">Полтавський і обласним</div>
<div class="t" id="t51" style="left:48.50px;top:329.09px;font-size:3.1px;color:#f6f9fb;transform:scaleX(1.1585);text-shadow:0 0 .55px rgba(255,255,255,.95);">запобігли нам в роботі. Буде</div>
<div class="t" id="t52" style="left:48.50px;top:332.59px;font-size:3.1px;color:#f6f9fb;transform:scaleX(1.1706);text-shadow:0 0 .55px rgba(255,255,255,.95);">практика, права і групові</div>
<div class="t" id="t53" style="left:48.50px;top:336.19px;font-size:3.1px;color:#f6f9fb;transform:scaleX(1.0310);text-shadow:0 0 .55px rgba(255,255,255,.95);">заняття з дітьми, які потребували</div>
<div class="t" id="t54" style="left:48.50px;top:339.69px;font-size:3.1px;color:#f6f9fb;transform:scaleX(1.0341);text-shadow:0 0 .55px rgba(255,255,255,.95);">певних суперсил.</div>
<div class="t" id="t55" style="left:45.00px;top:311.80px;font-size:2.6px;color:#a6d22c;transform:scaleX(0.8000);">▸</div>
<div class="t" id="t56" style="left:136.30px;top:326.37px;font-size:2.4px;color:#6a4a4a;font-weight:bold;transform:scaleX(1.3534);">Ресурсний центр</div>
<div class="t" id="t57" style="left:45.00px;top:413.39px;font-size:3.0px;color:#f6f9fb;transform:scaleX(1.0419);text-shadow:0 0 .55px rgba(255,255,255,.95);">7.10. зустріч з керівником центру надання підтримки та вивчення документів,</div>
<div class="t" id="t58" style="left:41.30px;top:413.55px;font-size:2.6px;color:#a6d22c;transform:scaleX(0.8000);">▸</div>
<div class="t" id="t59" style="left:45.00px;top:416.54px;font-size:3.0px;color:#f6f9fb;transform:scaleX(0.9024);text-shadow:0 0 .55px rgba(255,255,255,.95);">ознайомлення з колективом та напрямами</div>
<div class="t" id="t60" style="left:45.00px;top:421.14px;font-size:3.0px;color:#f6f9fb;transform:scaleX(1.0395);text-shadow:0 0 .55px rgba(255,255,255,.95);">8.10. ознайомлення з базою та програмою виробничої практики</div>
<div class="t" id="t61" style="left:41.30px;top:421.30px;font-size:2.6px;color:#a6d22c;transform:scaleX(0.8000);">▸</div>
<div class="t" id="t62" style="left:45.00px;top:425.89px;font-size:3.0px;color:#f6f9fb;transform:scaleX(1.0851);text-shadow:0 0 .55px rgba(255,255,255,.95);">9.10 вивчення нормативної бази та освоєння програмного забезпечення центру</div>
<div class="t" id="t63" style="left:41.30px;top:426.05px;font-size:2.6px;color:#a6d22c;transform:scaleX(0.8000);">▸</div>
<div class="t" id="t64" style="left:45.00px;top:430.54px;font-size:3.0px;color:#f6f9fb;transform:scaleX(1.0041);text-shadow:0 0 .55px rgba(255,255,255,.95);">10.10. знайомство з методикою роботи консультантів центру з відвідувачами та клієнтами</div>
<div class="t" id="t65" style="left:41.30px;top:430.70px;font-size:2.6px;color:#a6d22c;transform:scaleX(0.8000);">▸</div>
<div class="t" id="t66" style="left:45.00px;top:433.64px;font-size:3.0px;color:#f6f9fb;transform:scaleX(0.9964);text-shadow:0 0 .55px rgba(255,255,255,.95);">перегляд звітів працівників 10-11к</div>
<div class="t" id="t67" style="left:45.00px;top:438.39px;font-size:3.0px;color:#f6f9fb;transform:scaleX(1.0609);text-shadow:0 0 .55px rgba(255,255,255,.95);">11.10. Розробляємо сценарій для заходу що проводиться спільно з центром</div>
<div class="t" id="t68" style="left:41.30px;top:438.55px;font-size:2.6px;color:#a6d22c;transform:scaleX(0.8000);">▸</div>
<div class="t" id="t69" style="left:45.00px;top:443.64px;font-size:3.0px;color:#f6f9fb;transform:scaleX(1.0157);text-shadow:0 0 .55px rgba(255,255,255,.95);">14.10. Перегляд матеріалів з тим форуму</div>
<div class="t" id="t70" style="left:41.30px;top:443.80px;font-size:2.6px;color:#a6d22c;transform:scaleX(0.8000);">▸</div>
<div class="t" id="t71" style="left:45.00px;top:448.14px;font-size:3.0px;color:#f6f9fb;transform:scaleX(1.0545);text-shadow:0 0 .55px rgba(255,255,255,.95);">15.10. Аналіз з керівником Старшим базою, що самі записати в звіт та схеми.</div>
<div class="t" id="t72" style="left:41.30px;top:448.30px;font-size:2.6px;color:#a6d22c;transform:scaleX(0.8000);">▸</div>
<div class="t" id="t73" style="left:45.00px;top:452.74px;font-size:3.0px;color:#f6f9fb;transform:scaleX(1.0535);text-shadow:0 0 .55px rgba(255,255,255,.95);">16.10. Проведення групового заняття новою методикою в групах прифронтових</div>
<div class="t" id="t74" style="left:41.30px;top:452.90px;font-size:2.6px;color:#a6d22c;transform:scaleX(0.8000);">▸</div>
<div class="t" id="t75" style="left:45.00px;top:456.14px;font-size:3.0px;color:#f6f9fb;transform:scaleX(1.0462);text-shadow:0 0 .55px rgba(255,255,255,.95);">Консультаційні заняття ввечері.</div>
<div class="t" id="t76" style="left:45.00px;top:460.89px;font-size:3.0px;color:#f6f9fb;transform:scaleX(1.0432);text-shadow:0 0 .55px rgba(255,255,255,.95);">17.10 Проведення групового заняття новою методикою в групах прифронтових</div>
<div class="t" id="t77" style="left:41.30px;top:461.05px;font-size:2.6px;color:#a6d22c;transform:scaleX(0.8000);">▸</div>
<div class="t" id="t78" style="left:45.00px;top:464.24px;font-size:3.0px;color:#f6f9fb;transform:scaleX(1.0016);text-shadow:0 0 .55px rgba(255,255,255,.95);">Консультаційні заняття ввечері в рамках роботи</div>
<div class="t" id="t79" style="left:45.00px;top:468.64px;font-size:3.0px;color:#f6f9fb;transform:scaleX(1.0108);text-shadow:0 0 .55px rgba(255,255,255,.95);">18.10. Підготовка та оформлення звітної документації виробничої практики.</div>
<div class="t" id="t80" style="left:41.30px;top:468.80px;font-size:2.6px;color:#a6d22c;transform:scaleX(0.8000);">▸</div>
<div class="t" id="t81" style="left:45.00px;top:515.09px;font-size:3.3px;color:#f6f9fb;transform:scaleX(0.9671);text-shadow:0 0 .55px rgba(255,255,255,.95);">Наша команда супервізорів працювала з авторами та клієнтами центру Полтави,</div>
<div class="t" id="t82" style="left:41.30px;top:515.40px;font-size:2.6px;color:#a6d22c;transform:scaleX(0.8000);">▸</div>
<div class="t" id="t83" style="left:45.00px;top:518.49px;font-size:3.3px;color:#f6f9fb;transform:scaleX(1.0626);text-shadow:0 0 .55px rgba(255,255,255,.95);">Полтавського обласного центру соціальної допомоги. Перевірка своєї роботи</div>
<div class="t" id="t84" style="left:45.00px;top:522.59px;font-size:3.3px;color:#f6f9fb;transform:scaleX(1.1191);text-shadow:0 0 .55px rgba(255,255,255,.95);">виконана була в режимі супервізії, схема нашого заходу описана,</div>
<div class="t" id="t85" style="left:45.00px;top:526.59px;font-size:3.3px;color:#f6f9fb;transform:scaleX(0.9512);text-shadow:0 0 .55px rgba(255,255,255,.95);">презентовано комплекс. Приємно, що приймали тепло та найважливіше, що схема</div>
<div class="t" id="t86" style="left:45.00px;top:530.09px;font-size:3.3px;color:#f6f9fb;transform:scaleX(1.0610);text-shadow:0 0 .55px rgba(255,255,255,.95);">була корисною для подальшої роботи груп та клієнтів центру потрібними</div>
<div class="t" id="t87" style="left:45.00px;top:535.09px;font-size:3.3px;color:#f6f9fb;transform:scaleX(0.9661);text-shadow:0 0 .55px rgba(255,255,255,.95);">Потрібно було підготувати обладнання, меблі та приміщення, як підійшли учасники</div>
<div class="t" id="t88" style="left:41.30px;top:535.40px;font-size:2.6px;color:#a6d22c;transform:scaleX(0.8000);">▸</div>
<div class="t" id="t89" style="left:45.00px;top:539.09px;font-size:3.3px;color:#f6f9fb;transform:scaleX(1.0114);text-shadow:0 0 .55px rgba(255,255,255,.95);">Вивірити все, написати свої умови. Взяти примітки, підручні засоби, телефони, всі</div>
<div class="t" id="t90" style="left:45.00px;top:543.24px;font-size:3.3px;color:#f6f9fb;transform:scaleX(1.0912);text-shadow:0 0 .55px rgba(255,255,255,.95);">матеріали в процесі роботи. Для огляду продумати та передбачити</div>
<div class="t" id="t91" style="left:45.00px;top:546.59px;font-size:3.3px;color:#f6f9fb;transform:scaleX(1.0845);text-shadow:0 0 .55px rgba(255,255,255,.95);">проведення заходу, скласти лист для майбутньої та над керування</div>
<div class="t" id="t92" style="left:45.00px;top:551.59px;font-size:3.3px;color:#f6f9fb;transform:scaleX(0.9414);text-shadow:0 0 .55px rgba(255,255,255,.95);">Загалом наше життя, супервізія була в наміченому місці в строк та своїй значній</div>
<div class="t" id="t93" style="left:41.30px;top:551.90px;font-size:2.6px;color:#a6d22c;transform:scaleX(0.8000);">▸</div>
<div class="t" id="t94" style="left:45.00px;top:555.74px;font-size:3.3px;color:#f6f9fb;transform:scaleX(1.0473);text-shadow:0 0 .55px rgba(255,255,255,.95);">Прийнято, а після заходу зустріли тих, хто інструктував, як схеми діяльності</div>
<div class="t" id="t95" style="left:45.00px;top:559.74px;font-size:3.3px;color:#f6f9fb;transform:scaleX(1.1604);text-shadow:0 0 .55px rgba(255,255,255,.95);">своєї роботи</div>
<div class="t" id="t96" style="left:45.00px;top:565.09px;font-size:3.3px;color:#f6f9fb;transform:scaleX(0.9651);text-shadow:0 0 .55px rgba(255,255,255,.95);">Схема пройшла дуже конструктивно, за перевірки зібраних результатів протягом та</div>
<div class="t" id="t97" style="left:41.30px;top:565.40px;font-size:2.6px;color:#a6d22c;transform:scaleX(0.8000);">▸</div>
<div class="t" id="t98" style="left:45.00px;top:568.49px;font-size:3.3px;color:#f6f9fb;transform:scaleX(0.9414);text-shadow:0 0 .55px rgba(255,255,255,.95);">порівнянь в схемах та керуючих практикою.</div>
<div class="t" id="t99" style="left:41.00px;top:615.24px;font-size:3.0px;color:#f6f9fb;transform:scaleX(0.8908);text-shadow:0 0 .55px rgba(255,255,255,.95);">ЕТАПИ РОЗГЛЯДУ СУПЕРВІЗІЇ</div>
<div class="t" id="t100" style="left:44.75px;top:620.04px;font-size:3.0px;color:#f6f9fb;transform:scaleX(1.0370);text-shadow:0 0 .55px rgba(255,255,255,.95);">• знайомство та в колективі</div>
<div class="t" id="t101" style="left:41.30px;top:620.20px;font-size:2.6px;color:#a6d22c;transform:scaleX(0.8000);">▸</div>
<div class="t" id="t102" style="left:44.75px;top:624.64px;font-size:3.0px;color:#f6f9fb;transform:scaleX(1.0197);text-shadow:0 0 .55px rgba(255,255,255,.95);">• обговорення тем в групі</div>
<div class="t" id="t103" style="left:41.30px;top:624.80px;font-size:2.6px;color:#a6d22c;transform:scaleX(0.8000);">▸</div>
<div class="t" id="t104" style="left:44.75px;top:629.04px;font-size:3.0px;color:#f6f9fb;transform:scaleX(1.0115);text-shadow:0 0 .55px rgba(255,255,255,.95);">• вибір питання, яке буде опрацьовано в часі</div>
<div class="t" id="t105" style="left:41.30px;top:629.20px;font-size:2.6px;color:#a6d22c;transform:scaleX(0.8000);">▸</div>
<div class="t" id="t106" style="left:44.75px;top:633.39px;font-size:3.0px;color:#f6f9fb;transform:scaleX(1.0506);text-shadow:0 0 .55px rgba(255,255,255,.95);">• вибір формату групової супервізії</div>
<div class="t" id="t107" style="left:41.30px;top:633.55px;font-size:2.6px;color:#a6d22c;transform:scaleX(0.8000);">▸</div>
<div class="t" id="t108" style="left:44.75px;top:638.14px;font-size:3.0px;color:#f6f9fb;transform:scaleX(1.0752);text-shadow:0 0 .55px rgba(255,255,255,.95);">• практична схема</div>
<div class="t" id="t109" style="left:41.30px;top:638.30px;font-size:2.6px;color:#a6d22c;transform:scaleX(0.8000);">▸</div>
<div class="t" id="t110" style="left:44.75px;top:642.14px;font-size:3.0px;color:#f6f9fb;transform:scaleX(1.1274);text-shadow:0 0 .55px rgba(255,255,255,.95);">• рефлексія</div>
<div class="t" id="t111" style="left:41.30px;top:642.30px;font-size:2.6px;color:#a6d22c;transform:scaleX(0.8000);">▸</div>
<div class="t" id="t112" style="left:41.00px;top:646.54px;font-size:3.0px;color:#f6f9fb;transform:scaleX(0.8484);text-shadow:0 0 .55px rgba(255,255,255,.95);">ЕТАПИ В КОМАНДІ В БАЛІНТА</div>
<div class="t" id="t113" style="left:44.75px;top:651.24px;font-size:3.0px;color:#f6f9fb;transform:scaleX(0.8350);text-shadow:0 0 .55px rgba(255,255,255,.95);">1. Для особливих запитів. Усний опис ситуації з метою відношення</div>
<div class="t" id="t114" style="left:41.30px;top:651.40px;font-size:2.6px;color:#a6d22c;transform:scaleX(0.8000);">▸</div>
<div class="t" id="t115" style="left:44.75px;top:654.24px;font-size:3.0px;color:#f6f9fb;transform:scaleX(1.0691);text-shadow:0 0 .55px rgba(255,255,255,.95);">часті</div>
<div class="t" id="t116" style="left:122.75px;top:605.64px;font-size:3.0px;color:#f6f9fb;transform:scaleX(0.8975);text-shadow:0 0 .55px rgba(255,255,255,.95);">План:</div>
<div class="t" id="t117" style="left:122.75px;top:608.74px;font-size:3.0px;color:#f6f9fb;transform:scaleX(0.9206);text-shadow:0 0 .55px rgba(255,255,255,.95);">1. Привітання з колегами і</div>
<div class="t" id="t118" style="left:122.75px;top:612.14px;font-size:3.0px;color:#f6f9fb;transform:scaleX(0.8984);text-shadow:0 0 .55px rgba(255,255,255,.95);">інформування про захід ( 5 хв.)</div>
<div class="t" id="t119" style="left:122.75px;top:615.64px;font-size:3.0px;color:#f6f9fb;transform:scaleX(0.8963);text-shadow:0 0 .55px rgba(255,255,255,.95);">2. Пропозиція формату супервізії та вибір</div>
<div class="t" id="t120" style="left:122.75px;top:619.39px;font-size:3.0px;color:#f6f9fb;transform:scaleX(0.9046);text-shadow:0 0 .55px rgba(255,255,255,.95);">для роботи, прийняття (10 хв.)</div>
<div class="t" id="t121" style="left:122.75px;top:622.74px;font-size:3.0px;color:#f6f9fb;transform:scaleX(0.9438);text-shadow:0 0 .55px rgba(255,255,255,.95);">3. Обговорення кейсу ( 10-15 хв.) та</div>
<div class="t" id="t122" style="left:122.75px;top:626.24px;font-size:3.0px;color:#f6f9fb;transform:scaleX(0.9475);text-shadow:0 0 .55px rgba(255,255,255,.95);">Питання з тим (опис схеми) ( 5 хв.)</div>
<div class="t" id="t123" style="left:122.75px;top:629.64px;font-size:3.0px;color:#f6f9fb;transform:scaleX(0.9452);text-shadow:0 0 .55px rgba(255,255,255,.95);">4. Рекреація з боку учасників за (5-10 хв.)</div>
<div class="t" id="t124" style="left:122.75px;top:632.74px;font-size:3.0px;color:#f6f9fb;transform:scaleX(1.0207);text-shadow:0 0 .55px rgba(255,255,255,.95);">5. Зібрати написані відгуки, лист,</div>
<div class="t" id="t125" style="left:122.75px;top:636.14px;font-size:3.0px;color:#f6f9fb;transform:scaleX(0.9094);text-shadow:0 0 .55px rgba(255,255,255,.95);">діловий клієнтам про участь перелічити і ні</div>
<div class="t" id="t126" style="left:122.75px;top:639.24px;font-size:3.0px;color:#f6f9fb;transform:scaleX(0.8487);text-shadow:0 0 .55px rgba(255,255,255,.95);">роботі (5 хв.)</div>
<div class="t" id="t127" style="left:122.75px;top:642.74px;font-size:3.0px;color:#f6f9fb;transform:scaleX(1.0317);text-shadow:0 0 .55px rgba(255,255,255,.95);">6. Фінальний виступ та груповий</div>
<div class="t" id="t128" style="left:122.75px;top:646.14px;font-size:3.0px;color:#f6f9fb;transform:scaleX(0.8333);text-shadow:0 0 .55px rgba(255,255,255,.95);">проєктний підсумок ( 5 хв.)</div>
</body>
</html>
